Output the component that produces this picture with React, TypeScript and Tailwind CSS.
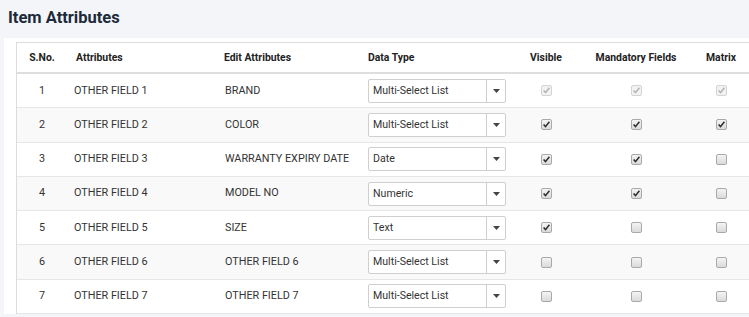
import React from 'react'

type Row = {
    no: number
    attr: string
    edit: string
    type: string
    visible: boolean
    mandatory: boolean
    matrix: boolean
    locked?: boolean
}

const rows: Row[] = [
    { no: 1, attr: 'OTHER FIELD 1', edit: 'BRAND', type: 'Multi-Select List', visible: true, mandatory: true, matrix: true, locked: true },
    { no: 2, attr: 'OTHER FIELD 2', edit: 'COLOR', type: 'Multi-Select List', visible: true, mandatory: true, matrix: true },
    { no: 3, attr: 'OTHER FIELD 3', edit: 'WARRANTY EXPIRY DATE', type: 'Date', visible: true, mandatory: true, matrix: false },
    { no: 4, attr: 'OTHER FIELD 4', edit: 'MODEL NO', type: 'Numeric', visible: true, mandatory: true, matrix: false },
    { no: 5, attr: 'OTHER FIELD 5', edit: 'SIZE', type: 'Text', visible: true, mandatory: false, matrix: false },
    { no: 6, attr: 'OTHER FIELD 6', edit: 'OTHER FIELD 6', type: 'Multi-Select List', visible: false, mandatory: false, matrix: false },
    { no: 7, attr: 'OTHER FIELD 7', edit: 'OTHER FIELD 7', type: 'Multi-Select List', visible: false, mandatory: false, matrix: false },
]

const cols = 'grid grid-cols-[50px_151px_143px_150px_70px_110px_60px]'

function Check({ checked, disabled }: { checked: boolean; disabled?: boolean }) {
    return (
        <span
            className={
                disabled
                    ? 'flex h-[11px] w-[11px] items-center justify-center rounded-[2px] border border-[#d4d4d4] bg-[#f2f2f2]'
                    : 'flex h-[11px] w-[11px] items-center justify-center rounded-[2px] border border-[#a9a9a9] bg-gradient-to-b from-[#f4f4f4] to-[#dadada]'
            }
        >
            {checked && (
                <svg width="9" height="9" viewBox="0 0 9 9">
                    <path
                        d="M1.6 4.6 L3.5 6.6 L7.4 1.8"
                        fill="none"
                        stroke={disabled ? '#b3b3b3' : '#2b2b2b'}
                        strokeWidth="1.5"
                    />
                </svg>
            )}
        </span>
    )
}

function TypeSelect({ value }: { value: string }) {
    return (
        <div className="flex h-[24px] w-[138px] items-stretch rounded-[2px] border border-[#cfcfcf] bg-white">
            <span className="flex flex-1 items-center pl-[4px] text-[10.6px] text-[#333]">{value}</span>
            <span className="flex w-[19px] items-center justify-center border-l border-[#cfcfcf]">
                <svg width="7" height="4" viewBox="0 0 7 4">
                    <path d="M0 0 L7 0 L3.5 4 Z" fill="#444" />
                </svg>
            </span>
        </div>
    )
}

export default function App() {
    return (
        <div className="h-[317px] w-[749px] overflow-hidden bg-[#f4f5f9] font-['Roboto',sans-serif]">
            <h1 className="px-[8px] pt-[7px] text-[16.5px] font-bold leading-[22px] text-[#1c2a39]">Item Attributes</h1>
            <div className="ml-[4px] mt-[9px] bg-white pl-[12px] pt-[4px]">
                <div className="w-[745px] border-l border-t border-[#dcdcdc]">
                    <div className={`${cols} h-[31px] items-center border-b-2 border-[#dedede] text-[10.4px] font-bold text-[#222]`}>
                        <span className="text-center">S.No.</span>
                        <span className="pl-[9px]">Attributes</span>
                        <span className="pl-[6px]">Edit Attributes</span>
                        <span className="pl-[7px]">Data Type</span>
                        <span className="text-center">Visible</span>
                        <span className="text-center">Mandatory Fields</span>
                        <span className="text-center">Matrix</span>
                    </div>
                    {rows.map((r, i) => (
                        <div
                            key={r.no}
                            className={`${cols} h-[34.3px] items-center border-b border-[#e6e6e6] text-[10.8px] text-[#333] ${i % 2 === 1 ? 'bg-[#f9f9f9]' : 'bg-white'}`}
                        >
                            <span className="text-center">{r.no}</span>
                            <span className="pl-[7px]">{r.attr}</span>
                            <span className="pl-[7px]">{r.edit}</span>
                            <span className="pl-[7px]">
                                <TypeSelect value={r.type} />
                            </span>
                            <span className="flex justify-center">
                                <Check checked={r.visible} disabled={r.locked} />
                            </span>
                            <span className="flex justify-center">
                                <Check checked={r.mandatory} disabled={r.locked} />
                            </span>
                            <span className="flex justify-center">
                                <Check checked={r.matrix} disabled={r.locked} />
                            </span>
                        </div>
                    ))}
                </div>
            </div>
        </div>
    )
}
